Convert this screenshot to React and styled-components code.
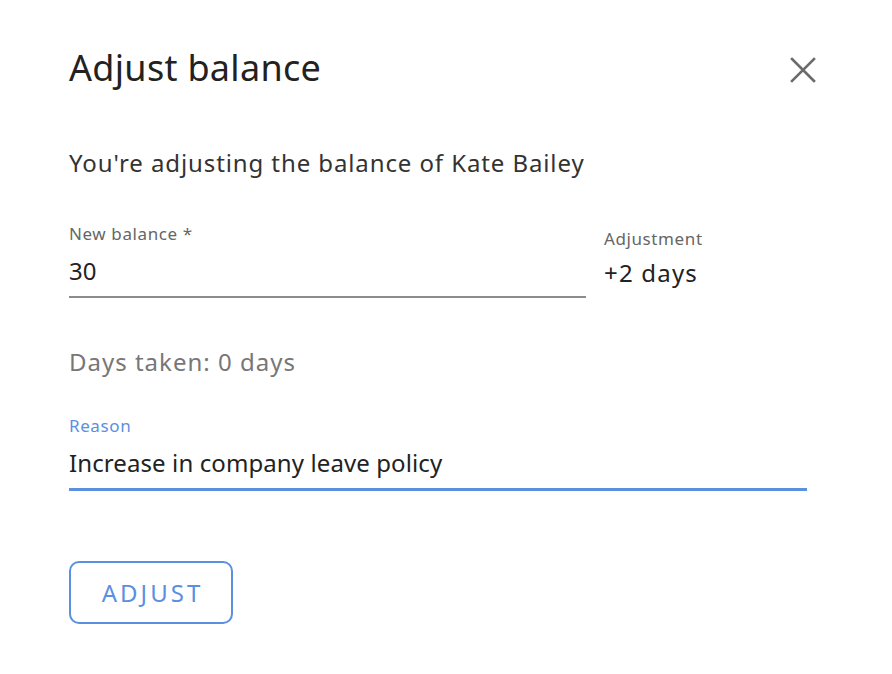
import React from "react";
import styled, { createGlobalStyle } from "styled-components";

const Global = createGlobalStyle`
  html, body { margin: 0; padding: 0; background: #fff; }
  body { font-family: "Noto Sans", "Open Sans", sans-serif; }
`;

const Dialog = styled.div`
  width: 892px;
  height: 674px;
  box-sizing: border-box;
  padding: 45px 69px 0 69px;
  background: #fff;
  border-radius: 4px;
  display: flex;
  flex-direction: column;
`;

const Header = styled.div`
  display: flex;
  align-items: flex-start;
  justify-content: space-between;
  margin-right: 7px;
`;

const Title = styled.h1`
  margin: 0;
  font-family: "Noto Sans", sans-serif;
  font-weight: 400;
  font-size: 36px;
  line-height: 46px;
  letter-spacing: 0.3px;
  color: #222;
`;

const CloseButton = styled.button`
  border: none;
  background: none;
  padding: 0;
  margin-top: 12px;
  width: 26px;
  height: 26px;
  display: flex;
  align-items: center;
  justify-content: center;
  cursor: pointer;
`;

const Intro = styled.p`
  margin: 56px 0 0 0;
  font-size: 24px;
  line-height: 32px;
  letter-spacing: 0.9px;
  color: #333;
`;

const Row = styled.div`
  display: flex;
  align-items: flex-start;
  gap: 18px;
  margin-top: 44px;
`;

const Field = styled.div`
  display: flex;
  flex-direction: column;
  width: ${(p) => p.$width};
`;

const Label = styled.label`
  font-size: 17px;
  line-height: 22px;
  letter-spacing: 0.6px;
  color: ${(p) => (p.$focused ? "#5b8fe0" : "#666")};
`;

const Input = styled.div`
  font-size: 24px;
  line-height: 32px;
  letter-spacing: 0.1px;
  color: #222;
  padding: 10px 0 9px 0;
  border-bottom: ${(p) => (p.$focused ? "3px solid #5b8fe0" : "2px solid #8c8c8c")};
`;

const Side = styled.div`
  display: flex;
  flex-direction: column;
  padding-top: 5px;
`;

const SideValue = styled.div`
  font-size: 24px;
  line-height: 32px;
  letter-spacing: 1.2px;
  color: #222;
  margin-top: 7px;
`;

const Muted = styled.p`
  margin: 49px 0 0 0;
  font-size: 24px;
  line-height: 30px;
  letter-spacing: 1px;
  color: #777;
`;

const ReasonWrap = styled.div`
  margin-top: 38px;
`;

const Button = styled.button`
  margin-top: 70px;
  align-self: flex-start;
  width: 164px;
  height: 63px;
  box-sizing: border-box;
  padding: 0 0 0 3px;
  border: 2px solid #5b8fe0;
  border-radius: 10px;
  background: #fff;
  color: #5b8fe0;
  font-family: "Noto Sans", sans-serif;
  font-size: 24px;
  letter-spacing: 3px;
  cursor: pointer;
`;

export default function App() {
  return (
    <>
      <Global />
      <Dialog>
        <Header>
          <Title>Adjust balance</Title>
          <CloseButton aria-label="close">
            <svg width="26" height="26" viewBox="0 0 26 26">
              <path d="M2 2 L24 24 M24 2 L2 24" stroke="#6b6b6b" strokeWidth="2.6" strokeLinecap="square" />
            </svg>
          </CloseButton>
        </Header>
        <Intro>You're adjusting the balance of Kate Bailey</Intro>
        <Row>
          <Field $width="517px">
            <Label>New balance *</Label>
            <Input>30</Input>
          </Field>
          <Side>
            <Label>Adjustment</Label>
            <SideValue>+2 days</SideValue>
          </Side>
        </Row>
        <Muted>Days taken: 0 days</Muted>
        <ReasonWrap>
          <Field $width="738px">
            <Label $focused>Reason</Label>
            <Input $focused>Increase in company leave policy</Input>
          </Field>
        </ReasonWrap>
        <Button>ADJUST</Button>
      </Dialog>
    </>
  );
}
